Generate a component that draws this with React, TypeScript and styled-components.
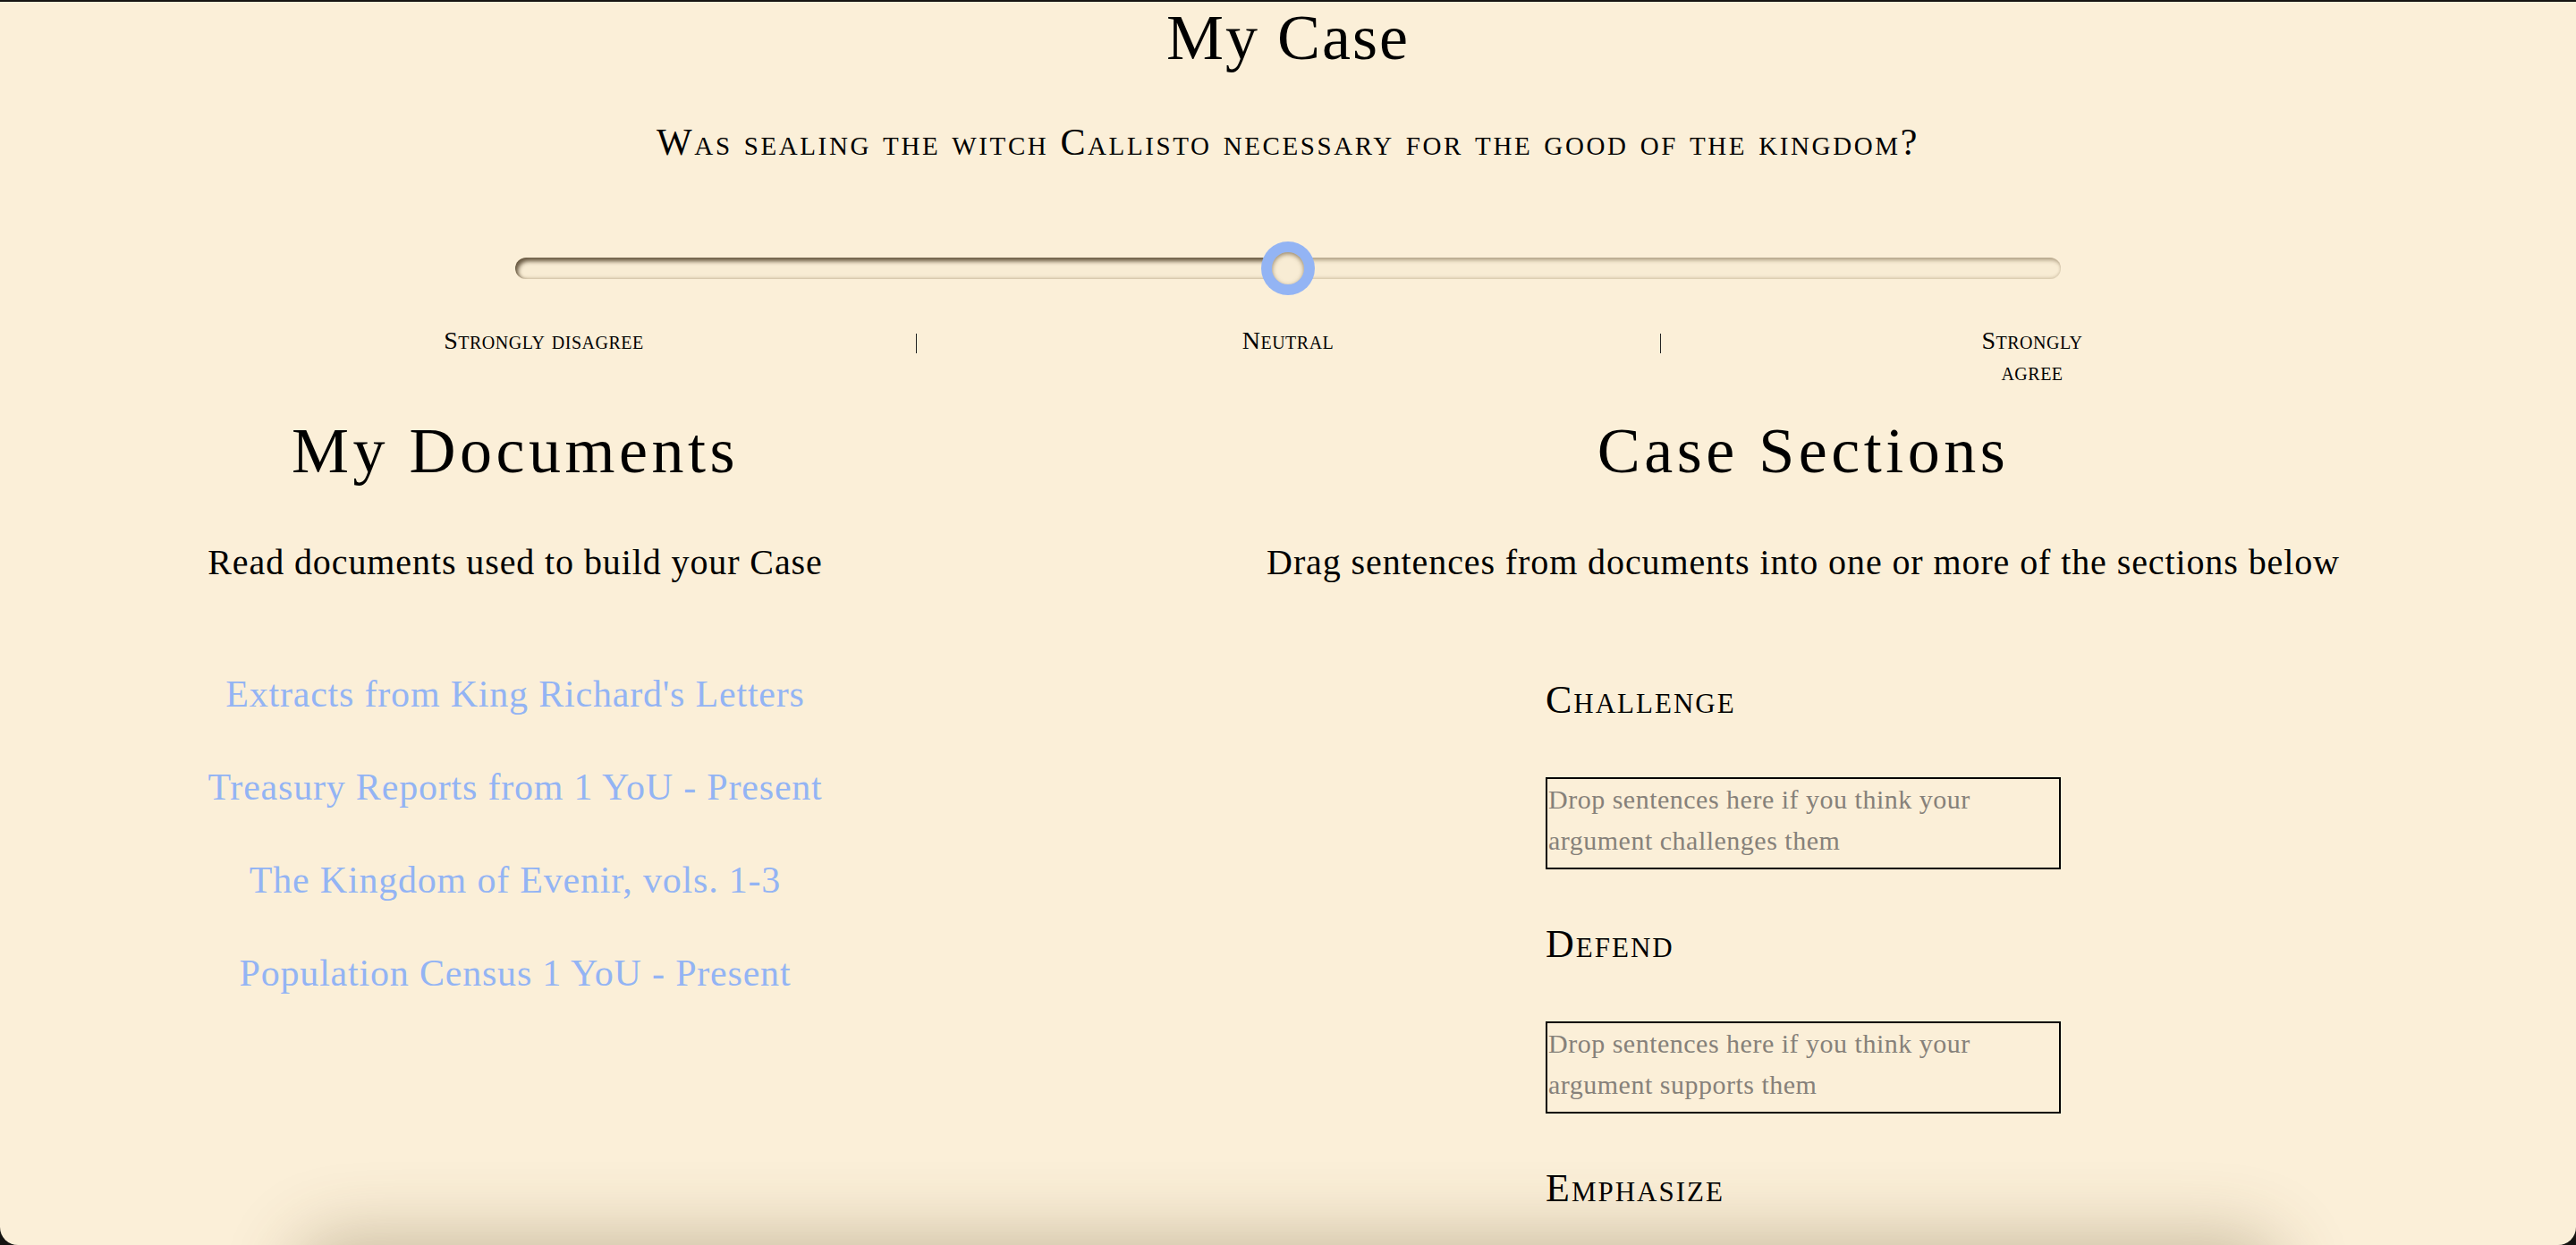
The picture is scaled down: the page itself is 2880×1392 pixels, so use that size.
import React from "react";
import styled, { createGlobalStyle } from "styled-components";

const GlobalStyle = createGlobalStyle`
  html, body {
    margin: 0;
    padding: 0;
    background: #151412;
  }
  body {
    font-family: "Liberation Serif", "DejaVu Serif", serif;
    color: #000;
  }
`;

// 전체 화면 틀
const Frame = styled.div`
  position: relative;
  margin-top: 2px;
  height: calc(100vh - 2px);
  background: #fbefd8;
  border-radius: 0 0 20px 20px;
  overflow: hidden;
`;

const Page = styled.div`
  display: flex;
  flex-direction: column;
  align-items: center;
  padding-top: 4px;
`;

const BigTitle = styled.h1<{ wide?: boolean }>`
  margin: 0;
  font-size: 72px;
  line-height: 1;
  font-weight: normal;
  letter-spacing: ${(p) => (p.wide ? "4.5px" : "2px")};
  text-align: center;
`;

const Question = styled.h2`
  margin: 60px 0 0;
  font-size: 42px;
  line-height: 1;
  font-weight: normal;
  font-variant: small-caps;
  letter-spacing: 2.6px;
  text-align: center;
`;

// 슬라이더
const SliderWrap = styled.div`
  position: relative;
  width: 1728px;
  height: 60px;
  margin-top: 90px;
  display: flex;
  align-items: center;
`;

const Track = styled.div`
  position: relative;
  width: 100%;
  height: 24px;
  border-radius: 12px;
  background: #f8ecd4;
  box-shadow: inset 2px 3px 4px rgba(90, 70, 40, 0.45),
    inset 0 -2px 3px rgba(160, 140, 105, 0.3);
  overflow: hidden;
`;

const Filled = styled.div`
  height: 100%;
  border-radius: 12px 0 0 12px;
  box-shadow: inset 3px 4px 5px rgba(55, 40, 20, 0.6);
`;

const Thumb = styled.div`
  position: absolute;
  top: 0;
  width: 60px;
  height: 60px;
  margin-left: -30px;
  border-radius: 50%;
  background: #93b4f4;
  display: flex;
  align-items: center;
  justify-content: center;
`;

const ThumbInner = styled.div`
  width: 36px;
  height: 36px;
  border-radius: 50%;
  background: #f8ecd4;
  box-shadow: inset 0 2px 5px rgba(70, 50, 20, 0.55);
`;

const Scale = styled.div`
  display: grid;
  grid-template-columns: repeat(5, 416px);
  margin-top: 33px;
`;

const ScaleLabel = styled.div<{ narrow?: boolean }>`
  justify-self: center;
  text-align: center;
  font-size: 28px;
  line-height: 35px;
  font-variant: small-caps;
  letter-spacing: 0.5px;
  max-width: ${(p) => (p.narrow ? "140px" : "none")};
`;

const Tick = styled.div`
  justify-self: center;
  width: 1px;
  height: 22px;
  margin-top: 10px;
  background: #222;
`;

// 아래 두 칸
const Columns = styled.div`
  display: grid;
  grid-template-columns: 2fr 3fr;
  width: 100%;
  margin-top: 35px;
`;

const Column = styled.div`
  display: flex;
  flex-direction: column;
  align-items: center;
`;

const Lead = styled.p`
  margin: 69px 0 0;
  font-size: 40px;
  line-height: 1;
  letter-spacing: 0.9px;
  text-align: center;
`;

const DocList = styled.div`
  display: flex;
  flex-direction: column;
  align-items: center;
  gap: 62px;
  margin-top: 106px;
`;

const DocLink = styled.a`
  font-size: 42px;
  line-height: 1;
  letter-spacing: 0.8px;
  color: #93b4f4;
  text-decoration: none;
  cursor: pointer;
`;

const Sections = styled.div`
  width: 576px;
  margin-top: 112px;
  display: flex;
  flex-direction: column;
`;

const SectionName = styled.h3`
  margin: 0 0 64px;
  font-size: 44px;
  line-height: 1;
  font-weight: normal;
  font-variant: small-caps;
  letter-spacing: 2px;
`;

const DropZone = styled.div`
  border: 2px solid #000;
  padding: 0 2px 7px 1px;
  margin-bottom: 62px;
  font-size: 30px;
  line-height: 46px;
  letter-spacing: 0.5px;
  color: #86817a;
`;

// 아래쪽에 떠 있는 패널 그림자
const BottomDrawer = styled.div`
  position: absolute;
  left: 340px;
  right: 340px;
  bottom: -120px;
  height: 120px;
  border-radius: 40px;
  background: #fbefd8;
  box-shadow: 0 0 80px 10px rgba(90, 70, 30, 0.3);
`;

const docs = [
  "Extracts from King Richard's Letters",
  "Treasury Reports from 1 YoU - Present",
  "The Kingdom of Evenir, vols. 1-3",
  "Population Census 1 YoU - Present",
];

const sections = [
  { name: "Challenge", hint: "Drop sentences here if you think your argument challenges them" },
  { name: "Defend", hint: "Drop sentences here if you think your argument supports them" },
  { name: "Emphasize", hint: "Drop sentences here if you think your argument emphasizes them" },
];

const App: React.FC = () => {
  const value = 50;
  return (
    <>
      <GlobalStyle />
      <Frame>
        <Page>
          <BigTitle>My Case</BigTitle>
          <Question>Was sealing the witch Callisto necessary for the good of the kingdom?</Question>

          <SliderWrap>
            <Track>
              <Filled style={{ width: `${value}%` }} />
            </Track>
            <Thumb style={{ left: `${value}%` }}>
              <ThumbInner />
            </Thumb>
          </SliderWrap>

          <Scale>
            <ScaleLabel>Strongly disagree</ScaleLabel>
            <Tick />
            <ScaleLabel>Neutral</ScaleLabel>
            <Tick />
            <ScaleLabel narrow>Strongly agree</ScaleLabel>
          </Scale>

          <Columns>
            <Column>
              <BigTitle wide>My Documents</BigTitle>
              <Lead>Read documents used to build your Case</Lead>
              <DocList>
                {docs.map((d) => (
                  <DocLink key={d}>{d}</DocLink>
                ))}
              </DocList>
            </Column>
            <Column>
              <BigTitle wide>Case Sections</BigTitle>
              <Lead>Drag sentences from documents into one or more of the sections below</Lead>
              <Sections>
                {sections.map((s) => (
                  <React.Fragment key={s.name}>
                    <SectionName>{s.name}</SectionName>
                    <DropZone>{s.hint}</DropZone>
                  </React.Fragment>
                ))}
              </Sections>
            </Column>
          </Columns>
        </Page>
        <BottomDrawer />
      </Frame>
    </>
  );
};

export default App;
